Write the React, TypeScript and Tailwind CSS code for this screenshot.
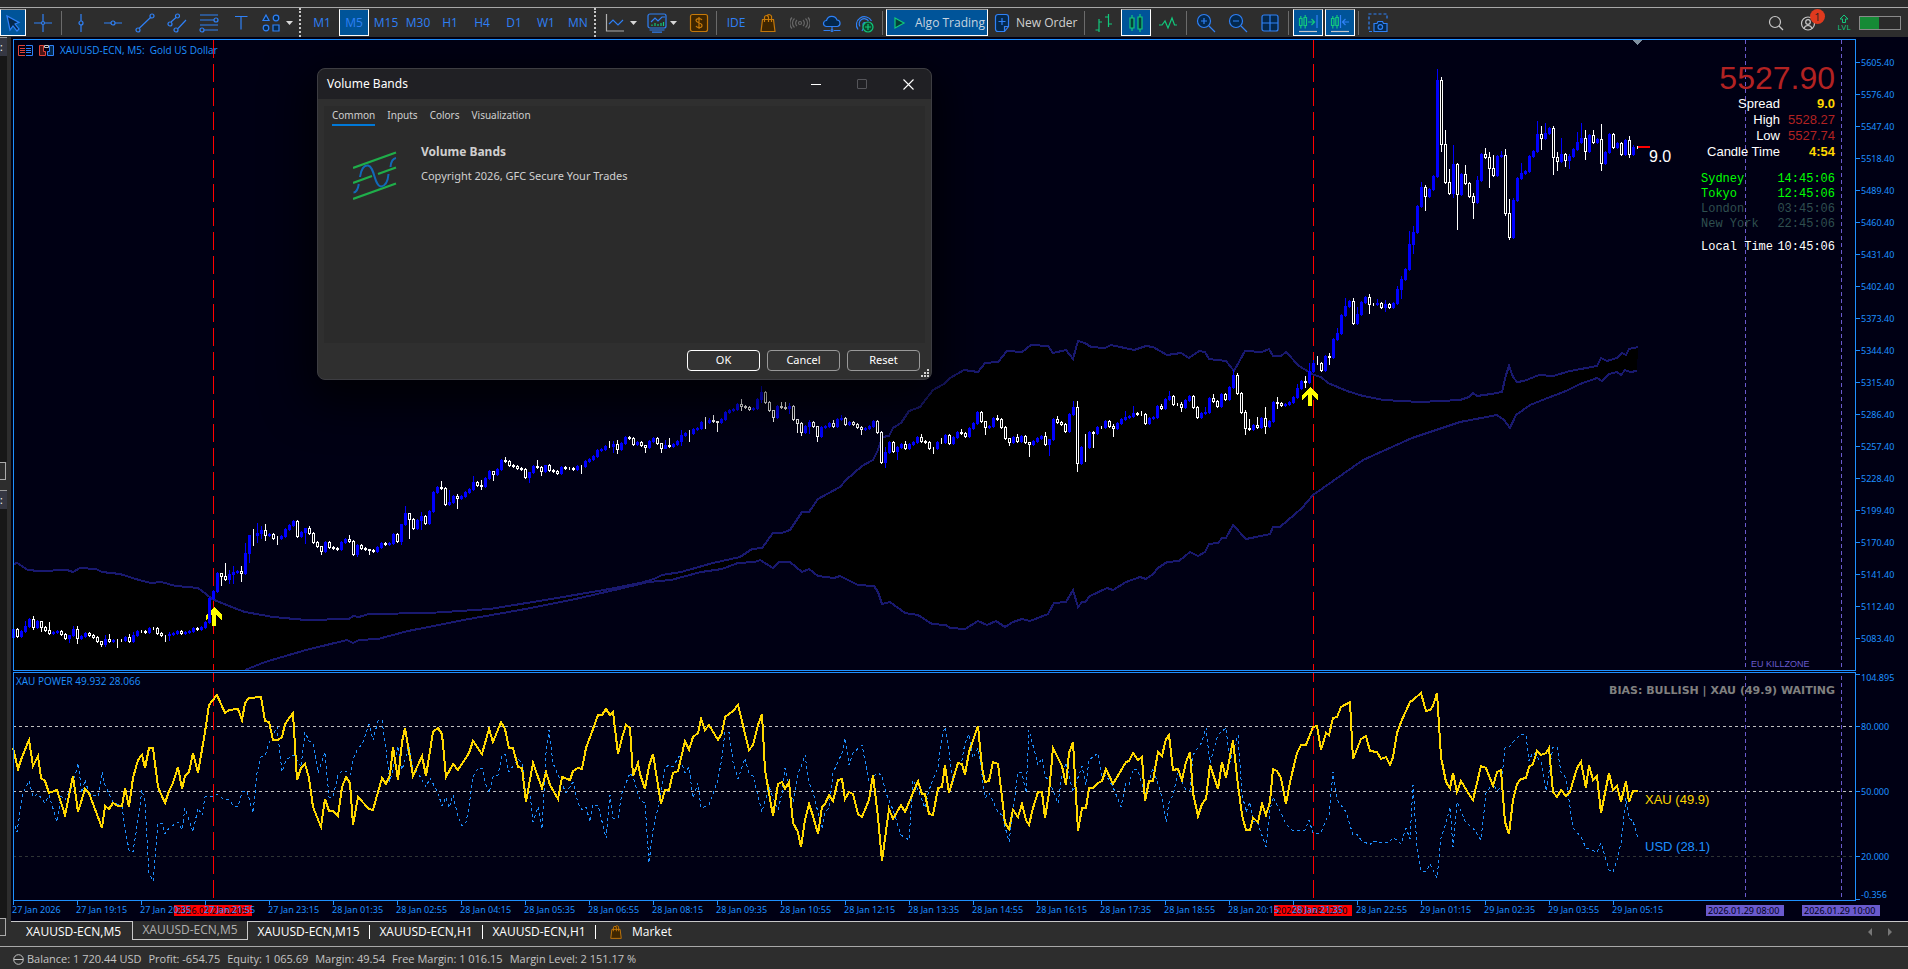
import { Fragment, type ReactNode } from 'react';
import clsx from 'clsx';

// Bars are 4px apart. Each token is close[/high[/low]], and a bar opens at the previous close.
const BARS = `629 636 631 626/621 619 627/616/629 621 627/621/631 630 633/622/634 632 631 634 638 635/638/642 629/626 638/626/643
636 633 635 637 641 644/641/646 639/635/646 641/634 640 640/639/647 640 637 641/634 635/632 631 631 632 628 628 633 635 635/635/641
634/632/640 633 631 633 632 631 628 629 627 622 598 591 573 576/573/585 579/563 574/570/583 572/566/583 571 573/566/581 553/543
535/535/562 535/529/545 533/523/542 530/526/538 535/524/540 534 538 538/536/544 536 529 525 521 536 532 528/528/543 533/526 542 546
551/546/554 542 547 548 549 542 539 541/535 554 545/544/556 548 549 550/549/554 551 547 543 544 543 534 541 524/524/544 513/506
519/513/538 528 520 516/512/529 523 511 492 487 488/481 504 502/490 496 498/494/508 496 492 489 482/476 485 486/480/489 478 471
474/471/480 469 460 461/457 465 466 468 469 477 472/472/482 466 467/460 471/466/475 465/465/472 470 471 473 467 468 468 469 466
466/465/473 461 459 456 450 449 446 446/441 444/441/452 449/440/453 443 437 438 444 442 445 447/445/452 441 438 443 448/443/452
445/440/448 446/438 444 441 435/430/445 433 433/430/441 429 428 422 422/417/428 420/418 421/415 422/421/431 419 412 410 409 404
406/399/410 407 409 408 399 392/386/402 402/391 410 417/410/421 406 407/402 408/402 406/403/413 419 423/419/432 432/422/435 426
422/420/433 426 436/426/441 427 426 423 426/420 419 418/415 424 422 424 427 429/426/434 428 426 421 432 462 452/447/467 442 451
447/446/459 444 448/441 444 442 437 441/434 442 448 448/447/453 442 442/438 435 443 437 432 433/429 436 428 423 412 421 427/421/434
426 418 419/415 427 438 442/438/445 437 441/434 436 442 444/442/456 441 438 436 444/432 439/439/455 419 422/416 424 431 414 407/401
463/401/471 447 447/434/461 432 433/431/447 427 427 421 426 428/424/436 423 419 417/411 416 413/406 414 414/411 423 418 417 406
408/404 399 396/391 404 404 407/402/411 400 396 407 417 413 412/407 398 401/394 406 394 399 387 375/370 393/373 412 428/410/434
429/419 425 427/417 418 426/407/433 421 402 403/397/408 405 404 402 397 388/384 381 382/376/387 371/363 363/360 363/356 370 356
357/353/364 339 333/328 315 306/298 301 323/298 314/307 302 297 304/294/313 304 303/299 307 304/300/311 307 303 289/286 279/276/298
269 244/231 232/226/253 206 187/182 196/185/210 189 176 80/69 144/77/151 182/130 193/169 164/145/197 194/163/229 174 183/165 196
202/193/218 180/176 154 157/148 168/152/187 175/155 156 155/151 213/149/215 237/199/239 200/198 178 173/163 171 156 151 134/121
138/126/149 133/123 128 157/126/174 161/152/170 154/138 160/153/166 156/154/168 149 142/132 138/123 151/130/159 135 142/130 139
163/124/170 152 134 147/133 143 154 140 154/136/157 147/145 147`.split(/\s+/);

const BAND_TOP =
  '14,564 17,563 28,570 39,571 67,570 73,572 80,568 96,569 102,572 120,574 139,580 151,583 161,582 176,586 198,588 206,594 212,599 229,606 245,612 273,617 306,620 349,619 353,616 359,617 369,614 429,613 490,609 551,599 604,590 640,583 654,579 662,575 681,572 713,563 740,557 752,549 762,548 773,533 782,533 790,530 802,512 809,512 818,499 840,487 846,480 862,466 873,460 878,450 882,437 889,436 893,428 901,423 909,411 920,407 933,390 944,384 950,378 964,370 978,372 985,363 998,362 1007,351 1022,352 1031,345 1048,346 1053,353 1066,350 1073,359 1078,341 1085,343 1091,347 1105,348 1111,345 1134,350 1146,346 1153,347 1167,355 1181,353 1189,358 1199,351 1205,352 1209,359 1226,361 1234,371 1245,351 1262,352 1269,349 1273,356 1281,356 1286,352 1299,366 1314,375 1321,377 1328,383 1347,391 1363,396 1384,400 1420,402 1460,400 1469,397 1473,393 1477,396 1491,394 1502,392 1506,375 1509,366 1513,377 1517,382 1524,381 1539,375 1553,376 1570,371 1597,366 1601,358 1607,361 1617,358 1622,353 1626,355 1629,349 1638,347';
const BAND_BOTTOM =
  '245,670 265,662 306,650 347,640 353,643 359,640 378,639 408,631 469,619 531,608 580,598 640,584 648,582 671,580 701,572 722,569 738,563 755,562 760,560 773,568 779,562 790,562 802,572 809,569 818,576 834,578 840,576 858,585 874,586 878,592 882,604 890,602 905,613 918,615 932,624 946,625 950,628 965,629 978,621 987,625 996,621 1005,627 1013,622 1022,619 1030,621 1048,614 1054,603 1066,602 1073,590 1078,607 1082,602 1085,602 1090,596 1107,588 1113,590 1126,582 1140,577 1146,579 1153,574 1158,568 1167,562 1179,561 1190,552 1198,556 1205,552 1209,544 1218,543 1222,538 1226,538 1233,525 1246,539 1256,537 1270,534 1273,527 1280,527 1302,508 1313,495 1363,460 1412,438 1460,422 1497,415 1504,420 1510,428 1516,415 1530,405 1545,399 1566,391 1580,384 1597,378 1602,381 1609,374 1617,372 1621,375 1625,370 1630,372 1637,371';

const XAU =
  '13,748 18,769 22,757 29,740 33,766 38,756 41,778 45,781 49,793 57,790 65,815 73,776 78,812 85,789 89,793 102,828 105,806 109,809 113,803 118,806 122,806 125,788 129,807 133,778 138,760 142,755 145,768 149,748 153,748 158,787 165,803 169,791 173,783 178,767 182,789 185,776 189,772 193,753 198,773 205,732 209,705 217,695 225,713 229,710 238,709 242,720 245,703 249,698 261,697 265,721 269,722 273,740 278,740 282,737 285,724 293,713 297,780 301,768 305,764 309,778 313,807 321,827 325,799 329,811 333,811 338,816 342,787 346,777 350,783 353,825 358,797 369,809 373,810 378,792 382,778 386,784 390,775 393,747 398,780 402,742 405,728 413,776 422,756 426,776 433,732 438,728 442,734 446,777 453,764 458,770 469,753 473,741 482,754 489,729 493,742 501,722 505,729 509,748 513,748 518,767 522,768 526,802 533,763 542,788 546,772 550,785 558,799 562,777 570,780 573,771 578,768 582,769 586,748 593,729 598,715 602,715 606,709 610,715 613,712 618,754 622,738 626,725 630,728 633,776 638,763 640,774 645,789 649,766 653,754 661,804 665,790 669,790 673,773 678,771 685,741 689,750 693,737 698,733 701,719 705,730 709,725 718,740 722,733 725,717 733,711 738,705 749,750 753,745 758,725 762,714 765,770 769,793 773,816 778,784 782,782 785,789 789,782 793,823 798,832 801,847 805,820 809,804 813,816 818,834 822,807 825,804 829,795 833,801 838,780 842,779 845,799 849,792 853,794 858,814 862,817 869,800 873,775 878,817 882,861 889,809 893,819 901,805 905,812 918,781 922,794 925,794 929,814 933,815 938,788 942,787 945,765 949,793 958,763 962,764 965,775 969,752 978,726 982,767 985,782 989,781 993,762 998,764 1002,797 1005,823 1009,829 1013,810 1018,817 1022,804 1026,820 1029,825 1033,808 1038,792 1042,792 1045,818 1049,793 1053,748 1062,766 1066,785 1069,753 1073,742 1078,831 1082,808 1086,808 1089,788 1093,788 1098,783 1102,781 1106,769 1113,784 1126,762 1129,761 1133,753 1138,760 1142,757 1145,801 1149,781 1153,781 1158,752 1162,756 1166,739 1169,735 1173,770 1178,769 1182,780 1186,762 1190,752 1193,793 1198,816 1202,804 1206,799 1210,765 1218,789 1222,762 1226,778 1233,740 1238,785 1242,815 1246,830 1250,830 1253,818 1258,822 1262,804 1266,815 1270,802 1273,769 1277,771 1281,778 1286,804 1290,782 1297,753 1301,745 1306,745 1313,727 1317,726 1321,750 1326,733 1329,735 1333,718 1337,717 1341,707 1350,702 1353,759 1361,739 1366,736 1370,751 1377,752 1381,759 1386,757 1390,765 1393,757 1397,733 1401,722 1410,702 1413,700 1421,693 1426,711 1430,710 1433,706 1437,693 1441,757 1446,782 1450,788 1453,773 1457,792 1461,781 1470,796 1473,800 1481,766 1486,768 1493,786 1497,772 1501,770 1505,822 1509,834 1513,800 1517,784 1521,779 1526,778 1529,767 1533,764 1537,751 1541,755 1546,753 1549,748 1553,792 1557,797 1561,790 1566,796 1570,792 1577,768 1581,762 1586,788 1589,765 1593,780 1597,776 1601,813 1609,773 1613,790 1617,786 1621,802 1626,781 1629,802 1633,791 1638,791';
const USD =
  '13,820 17,832 23,793 29,781 33,797 38,794 45,803 49,795 57,822 61,796 65,800 73,785 78,763 82,793 85,780 89,793 98,797 102,772 105,785 113,802 122,807 125,828 129,850 133,852 138,820 142,790 145,802 149,873 153,881 158,823 162,823 165,834 169,828 178,822 182,830 185,808 193,832 198,808 202,815 205,797 213,796 217,794 222,798 229,800 233,805 238,807 242,792 247,791 253,813 257,773 261,757 265,756 269,743 277,727 282,772 286,760 294,755 301,767 305,732 309,741 313,743 318,773 325,752 329,797 333,797 338,775 342,771 347,772 350,775 354,757 358,748 362,745 369,724 373,740 378,721 382,720 386,750 390,782 398,746 402,770 409,746 413,768 418,773 426,787 430,778 438,793 442,806 446,797 449,808 453,795 458,817 462,826 466,822 469,807 473,777 478,768 482,768 486,785 489,793 493,777 498,775 502,755 505,754 509,772 518,759 522,763 526,792 530,793 533,822 538,807 542,829 546,753 549,730 553,763 558,775 566,793 573,782 578,803 582,810 586,807 590,822 593,805 598,805 606,838 610,795 613,818 618,818 622,793 630,773 633,777 640,800 645,803 649,863 653,830 658,807 665,768 669,765 673,767 679,756 685,773 689,767 693,798 698,783 701,808 709,805 718,780 722,757 725,732 729,732 733,762 738,779 745,758 749,774 753,776 762,812 769,787 778,810 782,793 785,768 793,802 798,773 801,767 805,755 809,783 813,792 822,829 825,812 829,808 833,773 842,753 845,738 849,765 853,753 862,745 869,782 878,772 882,777 886,793 893,810 901,835 909,840 913,780 918,790 925,808 929,790 938,767 942,737 945,727 949,752 953,782 958,763 962,760 965,743 969,734 973,758 978,748 982,775 985,798 989,793 998,812 1002,815 1009,842 1013,810 1018,772 1022,773 1026,793 1029,730 1038,765 1042,758 1045,777 1049,780 1058,803 1062,775 1066,763 1073,792 1082,766 1086,785 1089,760 1098,753 1102,777 1106,775 1113,787 1121,807 1126,783 1129,785 1133,769 1138,770 1145,795 1153,768 1162,797 1166,822 1169,803 1173,795 1178,773 1186,790 1190,790 1193,755 1202,742 1206,728 1210,763 1213,752 1218,735 1226,728 1230,762 1238,735 1242,793 1246,812 1250,802 1253,822 1257,821 1266,847 1270,810 1273,797 1281,813 1286,824 1292,830 1305,830 1309,820 1313,833 1321,833 1326,820 1329,815 1333,772 1337,800 1341,805 1346,812 1353,835 1357,834 1361,840 1370,845 1373,841 1381,843 1390,842 1393,837 1401,844 1406,828 1410,839 1413,785 1417,847 1421,870 1426,872 1430,864 1437,878 1441,838 1446,823 1450,807 1453,847 1457,802 1466,823 1473,828 1481,840 1486,793 1493,783 1497,791 1501,787 1505,748 1509,747 1513,742 1521,734 1526,735 1529,761 1533,752 1541,762 1546,791 1553,747 1557,747 1561,772 1566,778 1570,807 1573,828 1581,837 1586,848 1597,852 1601,843 1609,870 1613,872 1617,860 1621,843 1626,798 1629,818 1633,821 1638,838';

const TIMES = [
  '27 Jan 2026', '27 Jan 19:15', '27 Jan 20:35', '27 Jan 21:55', '27 Jan 23:15', '28 Jan 01:35', '28 Jan 02:55',
  '28 Jan 04:15', '28 Jan 05:35', '28 Jan 06:55', '28 Jan 08:15', '28 Jan 09:35', '28 Jan 10:55', '28 Jan 12:15',
  '28 Jan 13:35', '28 Jan 14:55', '28 Jan 16:15', '28 Jan 17:35', '28 Jan 18:55', '28 Jan 20:15', '28 Jan 21:35',
  '28 Jan 22:55', '29 Jan 01:15', '29 Jan 02:35', '29 Jan 03:55', '29 Jan 05:15',
];

const MARKS = [
  { x: 174, label: '2026.01.27 22:05', fill: '#ff0000' },
  { x: 1274, label: '2026.01.28 22:00', fill: '#ff0000' },
  { x: 1706, label: '2026.01.29 08:00', fill: '#6a5acd' },
  { x: 1802, label: '2026.01.29 10:00', fill: '#6a5acd' },
];

const LEVELS = [
  { y: 677, label: '104.895', tick: 674 },
  { y: 726, label: '80.000', tick: 726 },
  { y: 791, label: '50.000', tick: 791 },
  { y: 856, label: '20.000', tick: 856 },
  { y: 894, label: '-0.356', tick: 899 },
];

const bars = BARS.map((token, i) => {
  const [close, high, low] = token.split('/').map(Number);
  const open = i ? Number(BARS[i - 1].split('/')[0]) : 637;
  const top = Math.min(open, close);
  const bottom = Math.max(open, close);
  return {
    x: 13.5 + 4 * i, up: close < open, top, bottom,
    high: Math.min(high ?? top - 1, top), low: Math.max(low ?? bottom + 1, bottom),
  };
});

const Arrow = ({ x, y }: { x: number; y: number }) => (
  <path
    d={`M${x} ${y}l8 8v5l-6 -5v11h-4v-11l-6 5v-5z`}
    fill="#ffff00"
  />
);

const PriceChart = () => (
  <svg
    viewBox="11 37 1897 635"
    preserveAspectRatio="xMinYMin slice"
    className="block min-h-0 w-full flex-[635]"
    shapeRendering="crispEdges"
  >
    <polygon points={`${BAND_TOP} ${BAND_BOTTOM.split(' ').reverse().join(' ')} 14,670`} fill="#000000" />
    <g stroke="#6a5acd" strokeDasharray="4 3">
      <path d="M1745.5 40V669M1841.5 40V669" />
    </g>
    <g stroke="#ff0000" strokeDasharray="18 6">
      <path d="M213.5 40V670M1313.5 40V670" />
    </g>
    <polyline points={BAND_TOP} fill="none" stroke="#191970" strokeWidth="2" />
    <polyline points={BAND_BOTTOM} fill="none" stroke="#191970" strokeWidth="2" />
    <Arrow x={214} y={607} />
    <Arrow x={1310} y={387} />
    {bars.map((b) => (
      <g key={b.x} stroke={b.up ? '#0000ff' : '#ffffff'} fill={b.up ? '#0000ff' : '#000000'}>
        <path d={`M${b.x} ${b.high}V${b.low + 1}`} />
        <rect x={b.x - 1} y={b.top + 0.5} width="2" height={b.bottom - b.top} />
      </g>
    ))}
    <rect x="1638" y="146" width="12" height="2" fill="#ff0000" />
    <path d="M1632 40h10l-5 5z" fill="#8090a0" />
    <path d="M13.5 670.5V39.5H1855.5V670.5Z" fill="none" stroke="#1e90ff" />
    <text x="1649" y="162" fontSize="16" fill="#ffffff" fontFamily="Liberation Sans, sans-serif">9.0</text>
    <text x="1751" y="667" fontSize="9" fill="#6a5acd" fontFamily="Liberation Sans, sans-serif">EU KILLZONE</text>
    <g fill="#1e90ff" fontSize="9" fontFamily="Noto Sans, sans-serif">
      {Array.from({ length: 19 }, (_, i) => (
        <Fragment key={i}>
          <rect x="1856" y={62 + i * 32} width="4" height="1" />
          <text x="1861" y={66 + i * 32}>{(5605.4 - i * 29).toFixed(2)}</text>
        </Fragment>
      ))}
    </g>
  </svg>
);

const PowerChart = () => (
  <svg
    viewBox="11 672 1897 249"
    preserveAspectRatio="xMinYMin slice"
    className="block min-h-0 w-full flex-[249]"
    shapeRendering="crispEdges"
  >
    <g fontSize="9" fontFamily="Noto Sans, sans-serif" fill="#1e90ff">
      <text x="16" y="685" fontSize="10" fontFamily="Open Sans, sans-serif">XAU POWER 49.932 28.066</text>
      {LEVELS.map((l) => (
        <Fragment key={l.label}>
          <rect x="1856" y={l.tick} width="4" height="1" />
          <text x="1861" y={l.y + 4}>{l.label}</text>
        </Fragment>
      ))}
      {MARKS.map((m) => (
        <Fragment key={m.x}>
          <rect x={m.x} y="905" width="78" height="11" fill={m.fill} />
          <text x={m.x + 2} y="914" fill="#000014">{m.label}</text>
        </Fragment>
      ))}
      {TIMES.map((t, i) => (
        <Fragment key={t}>
          <rect x={13 + i * 64} y="901" width="1" height="4" />
          <text x={12 + i * 64} y="913">{t}</text>
        </Fragment>
      ))}
    </g>
    <path d="M13 726.5H1855M13 791.5H1855" stroke="#c0c0c0" strokeDasharray="3 3" />
    <path d="M13 856.5H1855" stroke="#2f3535" strokeDasharray="3 3" />
    <path d="M1745.5 676V900M1841.5 676V900" stroke="#6a5acd" strokeDasharray="4 3" />
    <path d="M213.5 672V898M1313.5 672V898" stroke="#ff0000" strokeDasharray="18 6" strokeDashoffset="8" />
    <polyline points={USD} fill="none" stroke="#1e90ff" strokeDasharray="3 3" />
    <polyline points={XAU} fill="none" stroke="#ffd700" strokeWidth="2" />
    <path d="M13.5 900.5V672.5H1855.5V900.5Z" fill="none" stroke="#1e90ff" />
    <g fontSize="13" fontFamily="Liberation Sans, sans-serif">
      <text x="1645" y="804" fill="#ffd700">XAU (49.9)</text>
      <text x="1645" y="851" fill="#1e90ff">USD (28.1)</text>
    </g>
    <text x="1835" y="694" textAnchor="end" fontSize="11" fontWeight="bold" fill="#808080" fontFamily="DejaVu Sans, sans-serif">
      BIAS: BULLISH | XAU (49.9) WAITING
    </text>
  </svg>
);

const QUOTES = [
  { label: 'Spread', value: '9.0', style: 'font-bold text-[#ffd700]' },
  { label: 'High', value: '5528.27', style: 'text-[#b22222]' },
  { label: 'Low', value: '5527.74', style: 'text-[#b22222]' },
  { label: 'Candle Time', value: '4:54', style: 'font-bold text-[#ffd700]' },
];

const CLOCKS = [
  { city: 'Sydney', time: '14:45:06', style: 'text-[#00ff00]' },
  { city: 'Tokyo', time: '12:45:06', style: 'text-[#00ff00]' },
  { city: 'London', time: '03:45:06', style: 'text-[#2f4f4f]' },
  { city: 'New York', time: '22:45:06', style: 'text-[#2f4f4f]' },
];

const QuotePanel = () => (
  <div className="absolute top-[23px] right-[73px] flex w-[134px] flex-col font-['Liberation_Sans',sans-serif]">
    <div className="self-end text-[32px] leading-9 text-[#b22222]">5527.90</div>
    <div className="flex flex-col text-[13px] leading-4">
      {QUOTES.map((q) => (
        <div key={q.label} className="flex justify-end whitespace-nowrap">
          <span className="text-white">{q.label}</span>
          <span className={clsx('w-[55px] text-right', q.style)}>{q.value}</span>
        </div>
      ))}
    </div>
    <div className="mt-3 flex flex-col font-['Liberation_Mono',monospace] text-[12px] leading-[15px]">
      {CLOCKS.map((c) => (
        <div key={c.city} className={clsx('flex justify-between', c.style)}>
          <span>{c.city}</span>
          <span>{c.time}</span>
        </div>
      ))}
      <div className="mt-2 flex justify-between whitespace-nowrap text-white">
        <span>Local Time</span>
        <span className="-ml-1">10:45:06</span>
      </div>
    </div>
  </div>
);

const Dialog = () => (
  <div
    role="dialog"
    aria-labelledby="dialog-title"
    className="absolute top-[31px] left-[306px] flex h-[312px] w-[615px] flex-col rounded-lg border border-[#3d3d42] bg-[#2f2f2f] font-['Noto_Sans',sans-serif] text-[11px] text-[#d0d0d0] shadow-[0_14px_44px_10px_rgba(0,0,0,0.75)]"
  >
    <div className="flex h-[30px] shrink-0 items-center rounded-t-lg bg-[#202024] pl-[9px]">
      <h1 id="dialog-title" className="flex-1 text-[12px] text-white">Volume Bands</h1>
      <button aria-label="Minimize" className="flex w-[46px] justify-center">
        <span className="h-px w-[10px] bg-white" />
      </button>
      <button aria-label="Maximize" disabled className="flex w-[46px] justify-center">
        <span className="size-[10px] rounded-[1px] border border-[#55555a]" />
      </button>
      <button aria-label="Close" className="flex w-[46px] justify-center">
        <svg width="11" height="11" viewBox="0 0 11 11" stroke="#ffffff" strokeWidth="1.1">
          <path d="M.5 .5l10 10M10.500 .5l-10 10" />
        </svg>
      </button>
    </div>
    <div className="mx-1.5 mt-[7px] flex flex-1 flex-col bg-[#2b2b2b]">
      <div role="tablist" className="flex gap-3 pl-2 text-[10px]">
        {['Common', 'Inputs', 'Colors', 'Visualization'].map((t, i) => (
          <button
            key={t}
            role="tab"
            aria-selected={i === 0}
            className={clsx('h-5 border-b-2', i === 0 ? 'border-[#0078d7]' : 'border-transparent')}
          >
            {t}
          </button>
        ))}
      </div>
      <div className="flex gap-6 pt-[18px] pl-[29px]">
        <svg width="44" height="50" viewBox="0 0 44 50" fill="none" className="mt-[7px]">
          <g stroke="#1fae4a" strokeWidth="2.2">
            <path d="M0 17L43 1.500M0 32L19 25M25 23L43 16.500M0 48L43 32.500" />
          </g>
          <path
            d="M.5 41.500C3 41.500 5 38 5.800 33M7 26C8 18 11 14 15 14.500C22 16 21 35 28 35.500C33 35 35 29 35.500 23M37.500 16C38 11 39.500 7.500 43 7"
            stroke="#1269b8"
            strokeWidth="2"
          />
        </svg>
        <div className="flex flex-col gap-2">
          <strong className="text-[12px] leading-4">Volume Bands</strong>
          <span className="leading-4">Copyright 2026, GFC Secure Your Trades</span>
        </div>
      </div>
    </div>
    <div className="relative flex h-9 shrink-0 items-center justify-end gap-[7px] pr-[11px] pb-px">
      <button className="h-[21px] w-[73px] rounded border border-white bg-[#333] text-white">OK</button>
      <button className="h-[21px] w-[73px] rounded border border-[#999] bg-[#333] text-white">Cancel</button>
      <button className="h-[21px] w-[73px] rounded border border-[#999] bg-[#333] text-white">Reset</button>
      <svg width="8" height="8" className="absolute right-0.5 bottom-0.5" fill="#d0d0d0">
        <path d="M6 0h2v2h-2zM3 3h2v2h-2zM6 3h2v2h-2zM0 6h2v2h-2zM3 6h2v2h-2zM6 6h2v2h-2z" />
      </svg>
    </div>
  </div>
);

const BLUE = '#2f81f7';
const GREEN = '#12c97d';

const Icon = ({ children, stroke = BLUE }: { children: ReactNode; stroke?: string }) => (
  <svg width="20" height="20" viewBox="0 0 20 20" fill="none" stroke={stroke} strokeWidth="1.200" className="shrink-0">
    {children}
  </svg>
);

const Tool = ({ label, children, active, wide }: { label: string; children: ReactNode; active?: boolean; wide?: string }) => (
  <button
    aria-label={label}
    className={clsx(
      'flex h-[27px] shrink-0 items-center justify-center',
      wide ?? (active ? 'mx-px w-[30px]' : 'w-8'),
      active && 'border border-white border-t-[#999] bg-[#005499]',
    )}
  >
    {children}
  </button>
);

const Caret = ({ label }: { label: string }) => (
  <button aria-label={label} className="flex w-2 shrink-0 justify-center">
    <svg width="7" height="4" fill="#d8d8d8"><path d="M0 0h7L3.500 4z" /></svg>
  </button>
);

const Sep = () => <span className="mr-[3px] ml-0.5 h-6 w-px shrink-0 bg-[#6b6b6b]" />;
const Grip = () => <span className="h-[29px] w-0.5 shrink-0 border-l-2 border-dotted border-[#c8c8c8]" />;

const Bag = ({ className }: { className: string }) => (
  <svg viewBox="0 0 16 18" className={className} fill="#3f2600" stroke="#c87a0a" strokeWidth="1.200">
    <path d="M2.500 5.500h11l1.500 12h-14zM4.500 8V3.500a2 2 0 0 1 4 0V8M7 2.500a2 2 0 0 1 4.500 1V8" />
  </svg>
);

const Toolbar = () => (
  <div role="toolbar" className="flex h-[29px] items-center bg-[#2d2d2d] font-['Open_Sans',sans-serif] text-[12px] text-[#2f81f7]">
    <Tool label="Cursor" active wide="w-[26px]">
      <Icon><path d="M4 3l3 14 3-4 4 5 2-2-4-5 4-1.500z" fill="#04284d" /></Icon>
    </Tool>
    <span className="w-px shrink-0" />
    <Tool label="Crosshair"><Icon><path d="M10 1v7M10 12v7M1 10h7M12 10h7" /><circle cx="10" cy="10" r="1.500" /></Icon></Tool>
    <Sep />
    <Tool label="Vertical line"><Icon><path d="M10 1v7M10 12v7" /><circle cx="10" cy="10" r="2" /></Icon></Tool>
    <Tool label="Horizontal line"><Icon><path d="M1 10h7M12 10h7" /><circle cx="10" cy="10" r="2" /></Icon></Tool>
    <Tool label="Trendline"><Icon><path d="M4 15.500L15.500 4.500" /><circle cx="3" cy="17" r="2" /><circle cx="17" cy="3" r="2" /></Icon></Tool>
    <Tool label="Channel">
      <Icon><path d="M4 9L9 4.500M11 15.500L19 7" /><circle cx="3" cy="11" r="2" /><circle cx="10.500" cy="3" r="2" /><circle cx="9" cy="17" r="2" /></Icon>
    </Tool>
    <Tool label="Fibonacci">
      <Icon><path d="M1 2h18M1 7h14M1 12h18M5 17h14" /><circle cx="17" cy="7" r="2" /><circle cx="3" cy="17" r="2" /></Icon>
    </Tool>
    <Tool label="Text"><Icon><path d="M4 3.500h12.500M10 3.500v13" /></Icon></Tool>
    <Tool label="Shapes" wide="w-7">
      <Icon>
        <path d="M5 2l3 5.500H2zM12 12h6v6h-6z" fill="#04284d" />
        <circle cx="15" cy="5" r="2.800" fill="#04284d" /><circle cx="5" cy="15" r="2.800" fill="#04284d" />
      </Icon>
    </Tool>
    <Caret label="More shapes" />
    <span className="w-1.5 shrink-0" />
    <Grip />
    <span className="w-[5px] shrink-0" />
    {['M1', 'M5', 'M15', 'M30', 'H1', 'H4', 'D1', 'W1', 'MN'].map((t) => (
      <Tool key={t} label={t} active={t === 'M5'}>{t}</Tool>
    ))}
    <Grip />
    <span className="w-1 shrink-0" />
    <Tool label="Chart" wide="w-[29px]">
      <Icon><path d="M1.500 1v17H19" stroke="#b0b0b0" /><path d="M4 11l4-4 5 5 5-5" /></Icon>
    </Tool>
    <Caret label="Chart menu" />
    <span className="w-2 shrink-0" />
    <Tool label="Indicators" wide="w-[24px]">
      <Icon>
        <rect x="1" y="1" width="18" height="14" rx="2" />
        <path d="M4 9l4-4 3 3 4-4h3M2.500 17h15M5 19.200h10" />
        <path d="M5 13v-1.500M8 13v-3M11 13v-2M14 13v-3M16.500 13v-4" stroke={GREEN} />
      </Icon>
    </Tool>
    <Caret label="Indicators menu" />
    <Tool label="Trading" wide="ml-[7px] w-[30px]">
      <Icon stroke="#c87a0a">
        <rect x="1.500" y="1.500" width="17" height="17" rx="2" fill="#3f2600" />
        <path d="M13 7c-1-2-6-2-6 .5S13 9.500 13 12.500s-5 2.500-6 .5M10 4v12" />
      </Icon>
    </Tool>
    <Sep />
    <Tool label="IDE">IDE</Tool>
    <Tool label="Market"><Bag className="h-[18px] w-4" /></Tool>
    <Tool label="Signals">
      <Icon stroke="#686868">
        <circle cx="10" cy="10" r="1.500" />
        <path d="M7 7a4 4 0 0 0 0 6M13 7a4 4 0 0 1 0 6M4.500 5.500a6 6 0 0 0 0 9M15.500 5.500a6 6 0 0 1 0 9M2 4.500a8 8 0 0 0 0 11M18 4.500a8 8 0 0 1 0 11" />
      </Icon>
    </Tool>
    <Tool label="Cloud">
      <Icon>
        <path d="M4.500 13.500a3 3 0 0 1 0-6 5.500 5.500 0 0 1 10.500-.5 3.300 3.300 0 0 1 .5 6.500z" fill="#04284d" />
        <path d="M10 13.500v3M1.500 17.500H8M12 17.500h6.500" /><circle cx="10" cy="17.500" r="1" />
      </Icon>
    </Tool>
    <Tool label="VPS">
      <Icon>
        <path d="M4 16.500A8 8 0 1 1 17.500 8M6 13.500a5 5 0 1 1 8.500-5.500M8 18a8 8 0 0 0 1-7 1.500 1.500 0 0 1 2.500-1" />
        <circle cx="14" cy="14" r="5" fill="#0c4a2c" stroke={GREEN} /><path d="M14 11v6M11 14h6" stroke={GREEN} />
      </Icon>
    </Tool>
    <Sep />
    <button className="flex h-[27px] w-[102px] shrink-0 items-center gap-1.5 border border-white border-t-[#999] bg-[#005499] pl-0.5 whitespace-nowrap text-[#c8d4e0]">
      <Icon stroke={GREEN}><path d="M6 5l9 5-9 5z" fill="#06403a" /></Icon>
      Algo Trading
    </button>
    <button className="flex h-[27px] w-[94px] shrink-0 items-center gap-1 pl-1 whitespace-nowrap text-[#d0d0d0]">
      <Icon><path d="M6 1.500h8a2.500 2.500 0 0 1 2.500 2.500v9.500l-4 5H6A2.500 2.500 0 0 1 3.500 16V4A2.500 2.500 0 0 1 6 1.500zM16.500 13.500h-4v5M10 5v7M6.500 8.500h7" fill="#04284d" /></Icon>
      New Order
    </button>
    <Sep />
    <Tool label="Bar chart"><Icon stroke={GREEN}><path d="M5 6v13M5 9h3M1.500 17H5M14.500 1v13M11 4h3.500M14.500 11H18" /></Icon></Tool>
    <Tool label="Candlesticks" active>
      <Icon stroke={GREEN}><path d="M4 5h4v10H4zM6 2v3M6 15v3M12 4h4v12h-4zM14 1v3M14 16v3" fill="#06403a" /></Icon>
    </Tool>
    <Tool label="Line chart"><Icon stroke={GREEN}><path d="M1 12h3l3-4 3 7 4-10 2.500 7H19" /></Icon></Tool>
    <Sep />
    <Tool label="Zoom in"><Icon><circle cx="8" cy="8" r="6.500" fill="#04284d" /><path d="M13 13l6 6M5 8h6M8 5v6" /></Icon></Tool>
    <Tool label="Zoom out"><Icon><circle cx="8" cy="8" r="6.500" fill="#04284d" /><path d="M13 13l6 6M5 8h6" /></Icon></Tool>
    <Tool label="Tile windows"><Icon><rect x="2" y="2" width="16" height="16" rx="2" fill="#04284d" /><path d="M10 2v16M2 10h16" /></Icon></Tool>
    <Sep />
    <Tool label="Auto scroll" active>
      <Icon>
        <path d="M1.500 5.500H4v7H1.500zM2.800 3v2.500M2.800 12.500v3M6 4.500h2.500v8H6zM7.200 2v2.500M7.200 12.500v3M10 9h6.500M13.500 6l3 3-3 3" stroke={GREEN} />
        <path d="M19 2v13" /><path d="M1 18.500h18" stroke="#c8c8c8" />
      </Icon>
    </Tool>
    <Tool label="Chart shift" active>
      <Icon>
        <path d="M1.500 5.500H4v7H1.500zM2.800 3v2.500M2.800 12.500v3M5.800 4.500h2.500v8H5.800zM7 2v2.500M7 12.500v3" stroke={GREEN} />
        <path d="M10.500 2v13M19 9h-6.500M15.500 6l-3 3 3 3" /><path d="M1 18.500h18" stroke="#c8c8c8" />
      </Icon>
    </Tool>
    <Sep />
    <Tool label="Screenshot">
      <Icon>
        <path d="M4 18.500H1V1h18v6" strokeDasharray="3 2" />
        <path d="M6 10.500h3l1-2h4.500l1 2H19v8H6z" fill="#04284d" /><circle cx="12.300" cy="14" r="2.300" />
      </Icon>
    </Tool>
    <span className="flex-1" />
    <Tool label="Search"><Icon stroke="#c8c8c8"><circle cx="9" cy="9" r="5.500" /><path d="M13 13l4 4" /></Icon></Tool>
    <button aria-label="Account, 1 notification" className="relative flex w-[33px] shrink-0 justify-center">
      <Icon stroke="#c8c8c8">
        <circle cx="9" cy="10.500" r="6.500" /><circle cx="9" cy="9" r="2.300" /><path d="M5 15.500c1-4 7-4 8 0" />
      </Icon>
      <span className="absolute -top-1 right-0 size-[15px] rounded-full bg-[#e03a1e] text-center text-[11px] leading-[15px] text-[#222]">1</span>
    </button>
    <button className="mr-0.5 ml-2.5 flex w-[18px] shrink-0 flex-col items-center text-[8px] leading-2 text-[#12c97d]">
      <svg width="10" height="9" viewBox="0 0 10 9" fill="none" stroke={GREEN}><path d="M3.500 8.500V5H1l4-4 4 4H6.500v3.500z" /></svg>
      LVL
    </button>
    <span className="mr-[7px] ml-1 h-[14px] w-[42px] shrink-0 border border-[#8a8a8a] bg-[#2a2a2a]">
      <span className="block h-full w-[19px] bg-[#158a36]" />
    </span>
  </div>
);

const Gutter = () => (
  <div className="flex w-[11px] shrink-0 flex-col bg-[#2d2d2d]">
    <div className="h-[19px] w-[7px] border-t border-[#999] bg-[#353742] text-[10px] leading-[18px] text-white">:</div>
    <div className="w-[7px] flex-[406] bg-[#171717]" />
    <div className="h-[18px] w-[6px] border border-l-0 border-[#aaa]" />
    <div className="mt-2.5 h-[19px] w-[7px] border-t border-[#999] bg-[#353742] text-[10px] leading-[18px] text-white">:</div>
    <div className="w-[7px] flex-[409] bg-[#171717]" />
    <div className="mb-2.5 h-[18px] w-[6px] border border-l-0 border-[#aaa]" />
  </div>
);

const TabBar = () => (
  <div className="flex h-[25px] shrink-0 items-start bg-[#2d2d2d] font-['Open_Sans',sans-serif] text-[12px] text-white">
    <button className="h-full w-[121px] border-t border-[#c8c8c8] pb-1 pl-1 text-center">XAUUSD-ECN,M5</button>
    <button className="h-[19px] w-[116px] border border-t-0 border-[#c8c8c8] leading-4 text-[#b0b0b0]">XAUUSD-ECN,M5</button>
    <div className="flex h-full flex-1 items-center border-t border-[#c8c8c8] pb-1">
      <button className="w-[121px]">XAUUSD-ECN,M15</button>
      <span className="h-3.5 w-px bg-white" />
      <button className="w-28">XAUUSD-ECN,H1</button>
      <span className="h-3.5 w-px bg-white" />
      <button className="w-28">XAUUSD-ECN,H1</button>
      <span className="h-3.5 w-px bg-white" />
      <button className="ml-3.5 flex items-center gap-2.5">
        <Bag className="h-3.5 w-3" />
        Market
      </button>
      <span className="flex-1" />
      <button aria-label="Previous tabs" className="w-5">
        <svg width="4" height="8" fill="#777"><path d="M4 0v8L0 4z" /></svg>
      </button>
      <button aria-label="Next tabs" className="w-5">
        <svg width="4" height="8" fill="#777"><path d="M0 0v8L4 4z" /></svg>
      </button>
    </div>
  </div>
);

const STATUS = [
  'Balance: 1 720.44 USD', 'Profit: -654.75', 'Equity: 1 065.69', 'Margin: 49.54', 'Free Margin: 1 016.15', 'Margin Level: 2 151.17 %',
];

export default function App() {
  return (
    <div className="flex h-screen flex-col overflow-hidden bg-[#2d2d2d]">
      <header className="shrink-0">
        <div className="h-2 border-b border-[#a8a8a8] bg-[#2b2b2b]" />
        <Toolbar />
      </header>
      <main className="flex min-h-0 flex-1">
        <Gutter />
        <div className="flex min-w-0 flex-1 flex-col">
          <div className="relative flex min-h-0 flex-1 flex-col bg-[#000014]">
            <PriceChart />
            <PowerChart />
            <div className="absolute top-1.5 left-[7px] flex items-center gap-1.5 font-['Open_Sans',sans-serif] text-[10px] text-[#1e90ff]">
              <svg width="15" height="12" fill="none">
                <path d="M7 .5H.5v10H7M2 3.500h5M2 5.500h5M2 7.500h5" stroke="#e0453a" />
                <path d="M8 .5h6.500v10H8M8 3.500h5M8 5.500h5M8 7.500h5" stroke="#2f81f7" />
              </svg>
              <svg width="15" height="12" fill="none">
                <path d="M4.500 .5h-4v10h6v-4h-2z" stroke="#e0453a" fill="#4d1414" />
                <path d="M10.500 .5h4v10h-6v-4h2z" stroke="#2f81f7" fill="#04284d" />
                <path d="M5.500 .5h4v2h-4z" stroke="#c8c8c8" />
              </svg>
              <span className="whitespace-pre">XAUUSD-ECN, M5:  Gold US Dollar</span>
            </div>
            <QuotePanel />
            <Dialog />
          </div>
          <TabBar />
        </div>
      </main>
      <footer className="flex h-[23px] shrink-0 items-center gap-[7px] border-t border-[#a8a8a8] pt-0.5 pl-[13px] font-['Open_Sans',sans-serif] text-[11px] text-[#c4c4c4]">
        <svg width="11" height="11" fill="none" stroke="#c4c4c4" className="-mr-1"><circle cx="5.500" cy="5.500" r="4.800" /><path d="M1 5.500h9" /></svg>
        {STATUS.map((s) => <span key={s} className="whitespace-nowrap">{s}</span>)}
      </footer>
    </div>
  );
}
